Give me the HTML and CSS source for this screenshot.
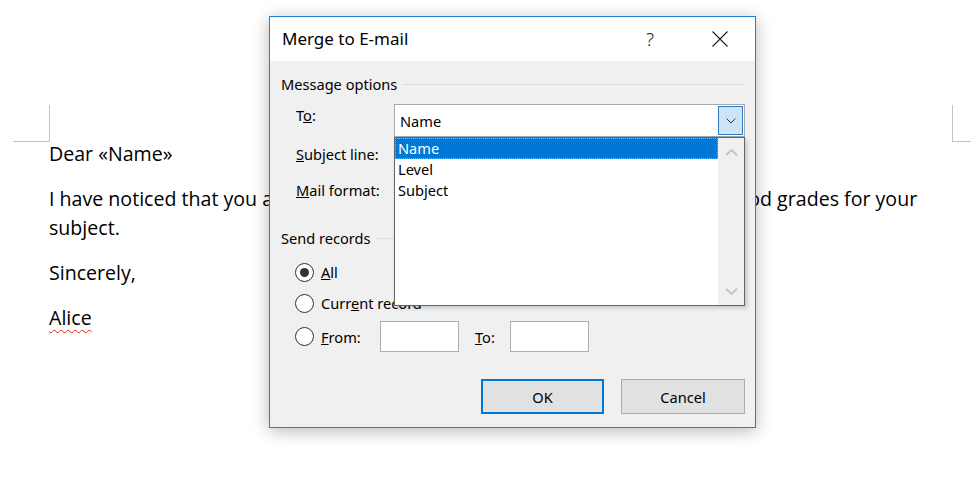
FILE: index.html
```html
<!DOCTYPE html>
<html lang="en">
<head>
<meta charset="utf-8">
<title>Merge to E-mail</title>
<link rel="stylesheet" href="styles.css">
</head>
<body>
<main class="page">
  <div class="page-body">
    <p>Dear «Name»</p>
    <p>I have noticed that you are not working hard enough and you may not get good grades for your<br>subject.</p>
    <p>Sincerely,</p>
    <p><span class="misspelled">Alice</span></p>
  </div>
</main>

<div class="dialog" role="dialog" aria-label="Merge to E-mail">
  <div class="titlebar">
    <span class="title">Merge to E-mail</span>
    <span class="help">?</span>
    <span class="close">
      <svg width="16" height="16" viewBox="0 0 16 16"><path d="M0.5 0.5 L15.5 15.5 M15.5 0.5 L0.5 15.5" stroke="#1a1a1a" stroke-width="1.1" fill="none"/></svg>
    </span>
  </div>
  <div class="dialog-body">
    <div class="group-head"><span>Message options</span></div>
    <div class="form-grid">
      <span class="lbl">T<u>o</u>:</span>
      <div class="combo">
        <span class="combo-text">Name</span>
        <span class="combo-btn"><svg width="10" height="6" viewBox="0 0 10 6"><path d="M0.5 0.5 L5 5 L9.5 0.5" stroke="#333" stroke-width="1" fill="none"/></svg></span>
      </div>
      <span class="lbl"><u>S</u>ubject line:</span>
      <div class="textbox"></div>
      <span class="lbl"><u>M</u>ail format:</span>
      <div class="combo"></div>
    </div>

    <div class="group-head second"><span>Send records</span></div>
    <div class="radios">
      <div class="radio-row"><span class="radio checked"></span><span class="rlbl"><u>A</u>ll</span></div>
      <div class="radio-row"><span class="radio"></span><span class="rlbl">Curr<u>e</u>nt record</span></div>
      <div class="radio-row from-row">
        <span class="radio"></span><span class="rlbl fixed"><u>F</u>rom:</span>
        <span class="field"></span>
        <span class="to-lbl"><u>T</u>o:</span>
        <span class="field"></span>
      </div>
    </div>

    <div class="buttons">
      <button class="btn default">OK</button>
      <button class="btn">Cancel</button>
    </div>
  </div>

  <div class="listbox">
    <ul class="items">
      <li class="selected">Name</li>
      <li>Level</li>
      <li>Subject</li>
    </ul>
    <div class="scrollbar">
      <span class="sb-btn"><svg width="13" height="7" viewBox="0 0 13 7"><path d="M1 6.2 L6.5 1 L12 6.2" stroke="#c4c4c4" stroke-width="2" fill="none"/></svg></span>
      <span class="sb-btn"><svg width="13" height="7" viewBox="0 0 13 7"><path d="M1 0.8 L6.5 6 L12 0.8" stroke="#c4c4c4" stroke-width="2" fill="none"/></svg></span>
    </div>
  </div>
</div>
</body>
</html>
```
FILE: styles.css
```css
* { box-sizing: border-box; }
html, body { margin: 0; padding: 0; }
body {
  width: 971px;
  height: 492px;
  overflow: hidden;
  position: relative;
  background: #fff;
  font-family: "Open Sans", "Noto Sans", sans-serif;
}

/* ---------- document page ---------- */
.page { padding: 139px 19px 0 49px; }
.page-body { position: relative; }
.page-body::before {
  content: "";
  position: absolute;
  left: -36px; top: -34px;
  width: 36px; height: 36px;
  border-right: 1px solid #c2c2c2;
  border-bottom: 1px solid #c2c2c2;
}
.page-body::after {
  content: "";
  position: absolute;
  left: 100%; top: -34px;
  width: 19px; height: 36px;
  border-left: 1px solid #c2c2c2;
  border-bottom: 1px solid #c2c2c2;
}
.page-body p {
  margin: 0 0 16px;
  font-size: 19.6px;
  line-height: 29px;
  color: #000;
  white-space: nowrap;
}
.misspelled {
  text-decoration: underline wavy #e0201b;
  text-decoration-thickness: 1px;
  text-underline-offset: 4px;
  text-decoration-skip-ink: none;
}

/* ---------- dialog ---------- */
.dialog {
  position: absolute;
  left: 269px; top: 16px;
  width: 487px; height: 412px;
  border: 1px solid #1883d7;
  background: #f0f0f0;
  box-shadow: 0 3px 16px rgba(0, 0, 0, 0.28);
  font-family: "Segoe UI", "Noto Sans", sans-serif;
  font-size: 14.6px;
  color: #000;
  display: flex;
  flex-direction: column;
}
.titlebar {
  height: 44px;
  flex: none;
  background: #fff;
  display: flex;
  align-items: center;
  padding: 0 12px 0 12px;
}
.title { flex: 1; font-size: 17px; line-height: 22px; }
.help {
  width: 46px;
  text-align: center;
  font-size: 19px;
  font-weight: 300;
  color: #222;
  margin-right: 24px;
  line-height: 22px;
}
.close {
  width: 46px;
  display: flex;
  justify-content: center;
  align-items: center;
}

.dialog-body {
  flex: 1;
  padding: 0 10px 0 11px;
}
.group-head {
  margin-top: 13px;
  height: 20px;
  display: flex;
  align-items: center;
  line-height: 20px;
}
.group-head::after {
  content: "";
  flex: 1;
  margin-left: 6px;
  border-top: 1px solid #dcdcdc;
}
.group-head.second { margin-top: 19px; }

.form-grid {
  margin-top: 10px;
  padding-left: 15px;
  display: grid;
  grid-template-columns: 98px 1fr;
  grid-template-rows: 33px 30px 30px;
  row-gap: 6px;
}
.lbl { padding-top: 1px; line-height: 20px; }
.combo {
  background: #fff;
  border: 1px solid #a9a9a9;
  display: flex;
  align-items: center;
  padding-left: 5px;
}
.combo-text { flex: 1; }
.combo-btn {
  width: 25px;
  height: 29px;
  margin-right: 1px;
  background: #cce4f7;
  border: 1px solid #2f7cc4;
  display: flex;
  align-items: center;
  justify-content: center;
}
.textbox { background: #fff; border: 1px solid #ababab; }

.radios {
  margin-top: 13px;
  padding-left: 14px;
  display: flex;
  flex-direction: column;
}
.radio-row {
  height: 22px;
  display: flex;
  align-items: center;
}
.radio-row + .radio-row { margin-top: 9px; }
.radio-row.from-row { height: 31px; margin-top: 7px; }
.radio {
  width: 19px; height: 19px;
  border: 1px solid #333;
  border-radius: 50%;
  background: #fff;
  display: flex;
  align-items: center;
  justify-content: center;
  flex: none;
}
.radio.checked::after {
  content: "";
  width: 9px; height: 9px;
  border-radius: 50%;
  background: #333;
}
.rlbl { margin-left: 7px; line-height: 20px; }
.rlbl.fixed { width: 59px; }
.field {
  width: 79px; height: 31px;
  background: #fff;
  border: 1px solid #adadad;
}
.to-lbl { margin-left: 16px; width: 35px; }

.buttons {
  margin-top: 27px;
  display: flex;
  justify-content: flex-end;
  gap: 17px;
}
.btn {
  width: 124px; height: 35px;
  background: #e1e1e1;
  border: 1px solid #adadad;
  font-family: inherit;
  font-size: 14.6px;
  color: #000;
  padding: 0;
}
.btn.default { width: 123px; border: 2px solid #0078d7; }

/* ---------- dropped-down list ---------- */
.listbox {
  position: absolute;
  left: 124px; top: 120px;
  width: 351px; height: 169px;
  border: 1px solid #646464;
  background: #fff;
  box-shadow: 2px 2px 4px rgba(0, 0, 0, 0.18);
  display: flex;
}
.items {
  list-style: none;
  margin: 0; padding: 0;
  flex: 1;
}
.items li {
  height: 21px;
  line-height: 21px;
  padding-left: 3px;
}
.items li.selected {
  background: #0078d7;
  color: #fff;
  outline: 1px dotted #f0a030;
  outline-offset: -1px;
}
.scrollbar {
  width: 26px;
  background: #f0f0f0;
  display: flex;
  flex-direction: column;
  justify-content: space-between;
}
.sb-btn {
  height: 28px;
  display: flex;
  align-items: center;
  justify-content: center;
}
```
